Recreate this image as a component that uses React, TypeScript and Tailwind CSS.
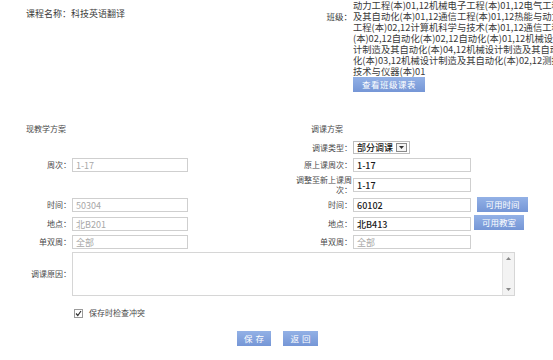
import React from "react";

const FONT = "font-['Noto_Sans_CJK_SC','Noto_Sans',sans-serif]";

function Btn({ children, className = "" }: { children: React.ReactNode; className?: string }) {
  return (
    <div
      className={`flex items-center justify-center bg-gradient-to-b from-[#93b1e6] to-[#7596d6] text-white text-[8.5px] leading-none ${className}`}
    >
      {children}
    </div>
  );
}

function Input({ value, w, gray, className = "" }: { value: string; w: string; gray?: boolean; className?: string }) {
  return (
    <div
      className={`${w} h-[14px] border border-[#cfcfcf] bg-white flex items-center pl-[3px] text-[9px] leading-none whitespace-nowrap ${
        gray ? "text-[#a8a8a8]" : "text-[#1a1a1a] font-medium"
      } ${className}`}
    >
      {value}
    </div>
  );
}

function LLabel({ children }: { children: React.ReactNode }) {
  return <div className="w-[72px] text-right text-[8px] text-[#4a4a4a] leading-none pr-[1px]">{children}</div>;
}
function RLabel({ children }: { children: React.ReactNode }) {
  return <div className="w-[73px] text-right text-[8px] text-[#4a4a4a] leading-[10px] pr-[1px]">{children}</div>;
}

const classLines = [
  "动力工程(本)01,12机械电子工程(本)01,12电气工程",
  "及其自动化(本)01,12通信工程(本)01,12热能与动力",
  "工程(本)02,12计算机科学与技术(本)01,12通信工程",
  "(本)02,12自动化(本)02,12自动化(本)01,12机械设",
  "计制造及其自动化(本)04,12机械设计制造及其自动",
  "化(本)03,12机械设计制造及其自动化(本)02,12测控",
  "技术与仪器(本)01",
];

export default function App() {
  return (
    <div className={`w-[553px] h-[360px] bg-white overflow-hidden ${FONT}`}>
      {/* top section */}
      <div className="flex h-[93px]">
        <div className="w-[280px] pl-[26px] pt-[9px] text-[9px] leading-[10px] text-[#3a3a3a]">
          课程名称：科技英语翻译
        </div>
        <div className="flex min-w-0 flex-1">
          <div className="w-[73px] shrink-0 text-right pt-[11px] text-[8.5px] leading-[10px] text-[#3a3a3a] pr-[1px]">班级：</div>
          <div className="flex flex-col min-w-0 flex-1 overflow-hidden">
            <div className="text-[9.3px] leading-[11px] text-[#3a3a3a] whitespace-nowrap">
              {classLines.map((l) => (
                <div key={l} className="h-[11px]">{l}</div>
              ))}
            </div>
            <Btn className="mt-[0px] w-[72px] h-[15px] tracking-[0.5px]">查看班级课表</Btn>
          </div>
        </div>
      </div>

      {/* headings */}
      <div className="flex mt-[30px] h-[12px] items-center text-[8px] text-[#4a4a4a] leading-none">
        <div className="w-[280px] pl-[26px]">现教学方案</div>
        <div className="pl-[31px]">调课方案</div>
      </div>

      {/* type row */}
      <div className="flex mt-[6px] h-[13px] items-center">
        <div className="w-[280px]" />
        <div className="flex items-center">
          <RLabel>调课类型：</RLabel>
          <div className="w-[57px] h-[13px] border border-[#bdbdbd] bg-white flex items-center justify-between pl-[3px] pr-[2px]">
            <span className="text-[9px] leading-none font-medium text-[#1a1a1a] whitespace-nowrap">部分调课</span>
            <span className="w-[11px] h-[9px] border border-[#8a8a8a] flex items-center justify-center bg-[#f4f4f4]">
              <svg width="5" height="3" viewBox="0 0 5 3">
                <path d="M0 0 L5 0 L2.5 3 Z" fill="#333" />
              </svg>
            </span>
          </div>
        </div>
      </div>

      {/* 周次 / 原上课周次 */}
      <div className="flex mt-[4px] h-[14px] items-center">
        <div className="w-[280px] flex items-center">
          <LLabel>周次：</LLabel>
          <Input value="1-17" w="w-[116px]" gray />
        </div>
        <div className="flex items-center">
          <RLabel>原上课周次：</RLabel>
          <Input value="1-17" w="w-[118px]" />
        </div>
      </div>

      {/* 调整至新上课周次 */}
      <div className="flex mt-[6px] h-[14px] items-center">
        <div className="w-[280px]" />
        <div className="flex items-center">
          <div className="w-[73px] text-right text-[8px] text-[#4a4a4a] leading-[10px] pr-[1px] whitespace-nowrap">
            调整至新上课周
            <br />
            次：
          </div>
          <Input value="1-17" w="w-[118px]" />
        </div>
      </div>

      {/* 时间 */}
      <div className="flex mt-[6px] h-[14px] items-center">
        <div className="w-[280px] flex items-center">
          <LLabel>时间：</LLabel>
          <Input value="50304" w="w-[116px]" gray />
        </div>
        <div className="flex items-center">
          <RLabel>时间：</RLabel>
          <Input value="60102" w="w-[118px]" />
          <Btn className="ml-[6px] w-[51px] h-[15px] -mt-[1px]">可用时间</Btn>
        </div>
      </div>

      {/* 地点 */}
      <div className="flex mt-[5px] h-[14px] items-center">
        <div className="w-[280px] flex items-center">
          <LLabel>地点：</LLabel>
          <Input value="北B201" w="w-[116px]" gray />
        </div>
        <div className="flex items-center">
          <RLabel>地点：</RLabel>
          <Input value="北B413" w="w-[118px]" />
          <Btn className="ml-[3px] w-[50px] h-[15px] -mt-[3px]">可用教室</Btn>
        </div>
      </div>

      {/* 单双周 */}
      <div className="flex mt-[4px] h-[14px] items-center">
        <div className="w-[280px] flex items-center">
          <LLabel>单双周：</LLabel>
          <Input value="全部" w="w-[116px]" gray />
        </div>
        <div className="flex items-center">
          <RLabel>单双周：</RLabel>
          <Input value="全部" w="w-[118px]" gray />
        </div>
      </div>

      {/* 调课原因 */}
      <div className="flex mt-[3px] h-[44px] items-center">
        <LLabel>调课原因：</LLabel>
        <div className="w-[443px] h-[44px] border border-[#d6d6d6] bg-white flex justify-end">
          <div className="w-[12px] h-full bg-[#f3f3f3] border-l border-[#e2e2e2] flex flex-col items-center justify-between py-[4px]">
            <svg width="5" height="3" viewBox="0 0 5 3">
              <path d="M0 3 L5 3 L2.5 0 Z" fill="#888" />
            </svg>
            <svg width="5" height="3" viewBox="0 0 5 3">
              <path d="M0 0 L5 0 L2.5 3 Z" fill="#888" />
            </svg>
          </div>
        </div>
      </div>

      {/* checkbox */}
      <div className="flex mt-[12px] items-center pl-[74px] h-[10px]">
        <svg width="9" height="9" viewBox="0 0 9 9">
          <rect x="0.5" y="0.5" width="8" height="8" fill="#fff" stroke="#9a9a9a" />
          <path d="M2 4.5 L3.8 6.5 L7 2" fill="none" stroke="#333" strokeWidth="1.2" />
        </svg>
        <span className="ml-[6px] text-[8px] leading-none text-[#4a4a4a]">保存时检查冲突</span>
      </div>

      {/* buttons */}
      <div className="flex mt-[13px] pl-[237px] gap-[12px]">
        <Btn className="w-[34px] h-[15px] tracking-[3px] pl-[3px]">保存</Btn>
        <Btn className="w-[35px] h-[15px] tracking-[3px] pl-[3px]">返回</Btn>
      </div>
    </div>
  );
}
